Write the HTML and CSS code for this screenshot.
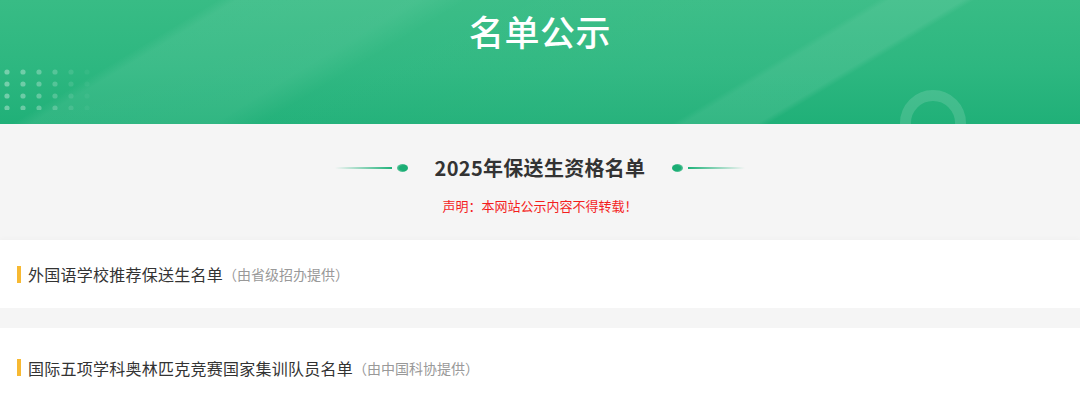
FILE: index.html
```html
<!DOCTYPE html>
<html lang="zh-CN">
<head>
<meta charset="utf-8">
<title>名单公示</title>
<link rel="stylesheet" href="styles.css">
</head>
<body>
<header class="banner">
  <svg class="dots" width="100" height="50" viewBox="0 0 100 50" aria-hidden="true">
    <g fill="#ffffff">
      <g opacity="0.35"><circle cx="7" cy="12" r="2.6"/><circle cx="7" cy="24" r="2.6"/><circle cx="7" cy="36" r="2.6"/><circle cx="7" cy="48" r="2.6"/></g>
      <g opacity="0.32"><circle cx="23" cy="12" r="2.6"/><circle cx="23" cy="24" r="2.6"/><circle cx="23" cy="36" r="2.6"/><circle cx="23" cy="48" r="2.6"/></g>
      <g opacity="0.28"><circle cx="39" cy="12" r="2.6"/><circle cx="39" cy="24" r="2.6"/><circle cx="39" cy="36" r="2.6"/><circle cx="39" cy="48" r="2.6"/></g>
      <g opacity="0.2"><circle cx="55" cy="12" r="2.6"/><circle cx="55" cy="24" r="2.6"/><circle cx="55" cy="36" r="2.6"/><circle cx="55" cy="48" r="2.6"/></g>
      <g opacity="0.1"><circle cx="71" cy="12" r="2.6"/><circle cx="71" cy="24" r="2.6"/><circle cx="71" cy="36" r="2.6"/><circle cx="71" cy="48" r="2.6"/></g>
      <g opacity="0.04"><circle cx="87" cy="12" r="2.6"/><circle cx="87" cy="24" r="2.6"/><circle cx="87" cy="36" r="2.6"/><circle cx="87" cy="48" r="2.6"/></g>
    </g>
  </svg>
  <div class="ring"></div>
  <h1 class="banner-title">名单公示</h1>
</header>

<section class="intro">
  <div class="intro-head">
    <span class="deco deco-left"><i class="line"></i><i class="dot"></i></span>
    <h2 class="intro-title">2025年保送生资格名单</h2>
    <span class="deco deco-right"><i class="dot"></i><i class="line"></i></span>
  </div>
  <p class="notice">声明：本网站公示内容不得转载！</p>
</section>

<main class="lists">
  <div class="card card-first">
    <h3 class="card-title">外国语学校推荐保送生名单<span class="src">（由省级招办提供）</span></h3>
  </div>
  <div class="card card-second">
    <h3 class="card-title">国际五项学科奥林匹克竞赛国家集训队员名单<span class="src">（由中国科协提供）</span></h3>
  </div>
</main>
</body>
</html>
```

FILE: styles.css
```css
html, body {
  margin: 0;
  padding: 0;
}
body {
  width: 1080px;
  height: 402px;
  overflow: hidden;
  background: #f5f5f5;
  font-family: "Noto Sans CJK SC", "Noto Sans", sans-serif;
}

.banner {
  position: relative;
  height: 124px;
  overflow: hidden;
  background:
    linear-gradient(149deg,
      rgba(255,255,255,0) 0px,
      rgba(255,255,255,0) 112px,
      rgba(255,255,255,0.07) 122px,
      rgba(255,255,255,0.08) 215px,
      rgba(255,255,255,0.02) 240px,
      rgba(255,255,255,0.03) 390px,
      rgba(255,255,255,0.03) 452px,
      rgba(255,255,255,0.09) 458px,
      rgba(255,255,255,0.09) 496px,
      rgba(255,255,255,0) 502px,
      rgba(255,255,255,0) 662px),
    linear-gradient(180deg, #38bc85 0%, #2db780 55%, #20b078 100%);
}
.dots {
  position: absolute;
  left: 0;
  top: 60px;
}
.ring {
  position: absolute;
  left: 900px;
  top: 90px;
  width: 44px;
  height: 44px;
  border: 11px solid rgba(255,255,255,0.14);
  border-radius: 50%;
}
.banner-title {
  position: relative;
  margin: 0;
  padding-top: 11px;
  text-align: center;
  color: #ffffff;
  font-size: 35px;
  line-height: 40px;
  font-weight: 500;
  letter-spacing: 0.5px;
}

.intro {
  background: #f5f5f5;
  height: 116px;
  padding-top: 1px;
  box-sizing: border-box;
}
.intro-head {
  display: flex;
  justify-content: center;
  align-items: center;
  gap: 27px;
  margin-top: 29px;
  height: 28px;
}
.intro-title {
  margin: 0;
  font-size: 20px;
  line-height: 28px;
  font-weight: 700;
  color: #333333;
  letter-spacing: 0.3px;
}
.deco {
  display: flex;
  align-items: center;
  gap: 5px;
}
.deco .line {
  display: block;
  width: 57px;
  height: 2px;
}
.deco-left .line {
  background: linear-gradient(90deg, rgba(31,178,122,0), #1fb27a);
}
.deco-right .line {
  background: linear-gradient(90deg, #1fb27a, rgba(31,178,122,0));
}
.deco .dot {
  display: block;
  width: 11px;
  height: 8px;
  border-radius: 50%;
}
.deco-left .dot {
  background: radial-gradient(ellipse at 65% 50%, #1aae74 45%, rgba(26,174,116,0.35) 100%);
}
.deco-right .dot {
  background: radial-gradient(ellipse at 40% 50%, #1aae74 45%, rgba(26,174,116,0.35) 100%);
}
.notice {
  margin: 15px 0 0;
  text-align: center;
  color: #f41e1e;
  font-size: 13px;
  line-height: 18px;
}

.lists {
  display: flex;
  flex-direction: column;
  gap: 20px;
}
.card {
  background: #ffffff;
  padding-left: 17px;
}
.card-first {
  height: 68px;
  display: flex;
  align-items: center;
  box-shadow: 0 -2px 4px rgba(0,0,0,0.02);
}
.card-second {
  height: 80px;
  padding-top: 31px;
  box-sizing: border-box;
}
.card-title {
  margin: 0;
  display: flex;
  align-items: center;
  font-size: 16px;
  line-height: 22px;
  font-weight: 400;
  color: #333333;
  letter-spacing: 0.25px;
  border-left: 4px solid #f7b932;
  padding-left: 7px;
  height: 17px;
}
.src {
  font-size: 14px;
  color: #999999;
  letter-spacing: 0;
}
```
